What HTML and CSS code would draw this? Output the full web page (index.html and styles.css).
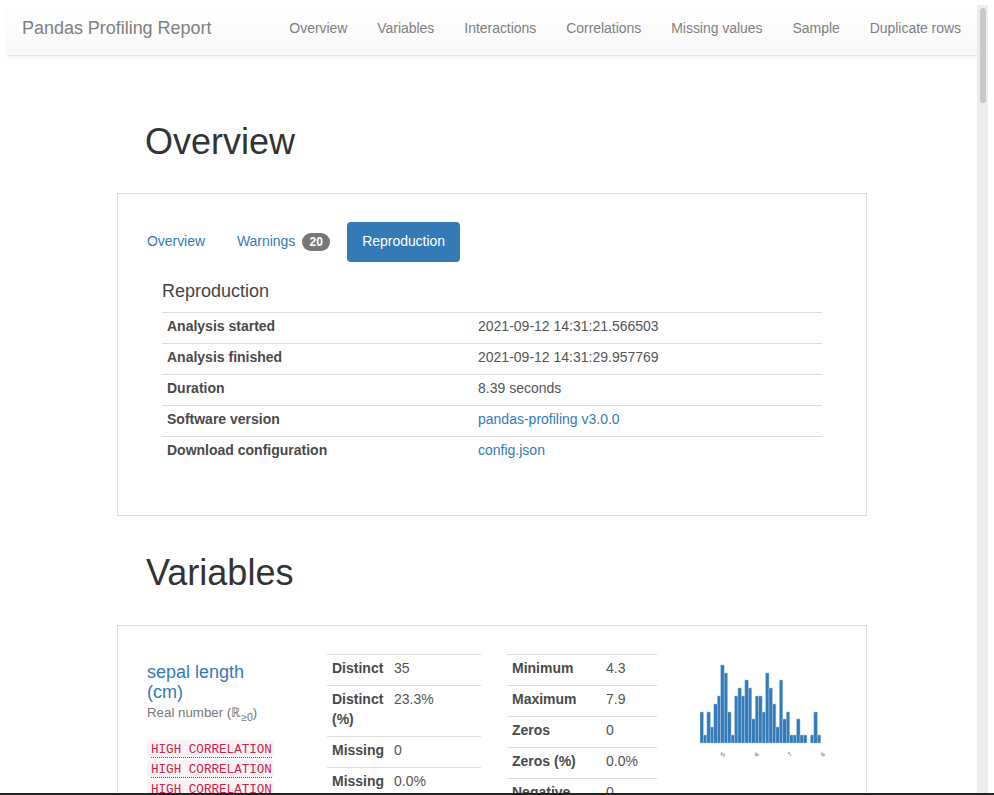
FILE: index.html
```html
<!DOCTYPE html>
<html lang="en">
<head>
    <meta charset="UTF-8">
    <title>Pandas Profiling Report</title>
    <link rel="stylesheet" href="styles.css">
</head>
<body>
    <nav class="navbar">
        <a class="brand" href="#">Pandas Profiling Report</a>
        <ul class="nav-links">
            <li><a href="#">Overview</a></li>
            <li><a href="#">Variables</a></li>
            <li><a href="#">Interactions</a></li>
            <li><a href="#">Correlations</a></li>
            <li><a href="#">Missing values</a></li>
            <li><a href="#">Sample</a></li>
            <li><a href="#">Duplicate rows</a></li>
        </ul>
    </nav>

    <main class="contenido">
        <h1 class="titulo-overview">Overview</h1>
        <section class="caja caja-overview">
            <ul class="pills">
                <li><a href="#">Overview</a></li>
                <li><a href="#">Warnings <span class="badge">20</span></a></li>
                <li><a class="activo" href="#">Reproduction</a></li>
            </ul>
            <div class="repro">
                <p class="repro-titulo">Reproduction</p>
                <table class="tabla tabla-repro">
                    <tr><th>Analysis started</th><td>2021-09-12 14:31:21.566503</td></tr>
                    <tr><th>Analysis finished</th><td>2021-09-12 14:31:29.957769</td></tr>
                    <tr><th>Duration</th><td>8.39 seconds</td></tr>
                    <tr><th>Software version</th><td><a href="#">pandas-profiling v3.0.0</a></td></tr>
                    <tr><th>Download configuration</th><td><a href="#">config.json</a></td></tr>
                </table>
            </div>
        </section>

        <h1 class="titulo-variables">Variables</h1>
        <section class="caja caja-variable">
            <div class="var-info">
                <a class="var-nombre" href="#">sepal length (cm)</a>
                <p class="var-tipo">Real number (&#8477;<sub>&ge;0</sub>)</p>
                <div class="alertas">
                    <code><abbr>HIGH CORRELATION</abbr></code>
                    <code><abbr>HIGH CORRELATION</abbr></code>
                    <code><abbr>HIGH CORRELATION</abbr></code>
                </div>
            </div>
            <table class="tabla tabla-a">
                <tr><th>Distinct</th><td>35</td></tr>
                <tr><th>Distinct (%)</th><td>23.3%</td></tr>
                <tr><th>Missing</th><td>0</td></tr>
                <tr><th>Missing (%)</th><td>0.0%</td></tr>
            </table>
            <table class="tabla tabla-b">
                <tr><th>Minimum</th><td>4.3</td></tr>
                <tr><th>Maximum</th><td>7.9</td></tr>
                <tr><th>Zeros</th><td>0</td></tr>
                <tr><th>Zeros (%)</th><td>0.0%</td></tr>
                <tr><th>Negative</th><td>0</td></tr>
            </table>
            <svg class="histograma" width="130" height="108" viewBox="0 0 130 108">
                <g fill="#337ab7" stroke="#a9cbe8" stroke-width="0.5">
                    <rect x="0.0" y="58" width="3.45" height="31"/>
                    <rect x="3.45" y="81" width="3.45" height="8"/>
                    <rect x="6.9" y="58" width="3.45" height="31"/>
                    <rect x="10.35" y="73" width="3.45" height="16"/>
                    <rect x="13.8" y="50" width="3.45" height="39"/>
                    <rect x="17.25" y="42" width="3.45" height="47"/>
                    <rect x="20.7" y="11" width="3.45" height="78"/>
                    <rect x="24.15" y="19" width="3.45" height="70"/>
                    <rect x="27.6" y="58" width="3.45" height="31"/>
                    <rect x="31.05" y="81" width="3.45" height="8"/>
                    <rect x="34.5" y="42" width="3.45" height="47"/>
                    <rect x="37.95" y="34" width="3.45" height="55"/>
                    <rect x="41.4" y="42" width="3.45" height="47"/>
                    <rect x="44.85" y="26" width="3.45" height="63"/>
                    <rect x="48.3" y="34" width="3.45" height="55"/>
                    <rect x="51.75" y="65" width="3.45" height="24"/>
                    <rect x="55.2" y="42" width="3.45" height="47"/>
                    <rect x="58.65" y="42" width="3.45" height="47"/>
                    <rect x="62.1" y="58" width="3.45" height="31"/>
                    <rect x="65.55" y="19" width="3.45" height="70"/>
                    <rect x="69.0" y="34" width="3.45" height="55"/>
                    <rect x="72.45" y="50" width="3.45" height="39"/>
                    <rect x="75.9" y="73" width="3.45" height="16"/>
                    <rect x="79.35" y="26" width="3.45" height="63"/>
                    <rect x="82.8" y="65" width="3.45" height="24"/>
                    <rect x="86.25" y="58" width="3.45" height="31"/>
                    <rect x="89.7" y="81" width="3.45" height="8"/>
                    <rect x="93.15" y="81" width="3.45" height="8"/>
                    <rect x="96.6" y="65" width="3.45" height="24"/>
                    <rect x="100.05" y="81" width="3.45" height="8"/>
                    <rect x="103.5" y="81" width="3.45" height="8"/>
                    <rect x="110.4" y="81" width="3.45" height="8"/>
                    <rect x="113.85" y="58" width="3.45" height="31"/>
                    <rect x="117.3" y="81" width="3.45" height="8"/>
                </g>
                <g class="ticks">
                    <text transform="translate(23 103) rotate(-45)">5</text>
                    <text transform="translate(57 103) rotate(-45)">6</text>
                    <text transform="translate(90 103) rotate(-45)">7</text>
                    <text transform="translate(123 103) rotate(-45)">8</text>
                </g>
            </svg>
        </section>
    </main>

    <div class="scroll-pista"><div class="scroll-barra"></div></div>
    <div class="borde-inferior"></div>
</body>
</html>
```

FILE: styles.css
```css
html, body {
    height: 100%;
    overflow: hidden;
}

body {
    margin: 0;
    font-family: "Liberation Sans", Arial, sans-serif;
    font-size: 14px;
    line-height: 20px;
    color: #333;
    background-color: #fff;
}

a {
    color: #337ab7;
    text-decoration: none;
}

.navbar {
    display: flex;
    justify-content: space-between;
    align-items: flex-start;
    box-sizing: border-box;
    width: 970px;
    height: 47px;
    margin: 9px 0 0 7px;
    padding: 9px 1px 0 15px;
    background: linear-gradient(to bottom, #fff, #f8f8f8);
    border-bottom: 1px solid #e7e7e7;
    box-shadow: 0 2px 4px rgba(0, 0, 0, 0.06);
}

.brand {
    font-size: 18px;
    color: #808080;
    letter-spacing: -0.03px;
}

.nav-links {
    display: flex;
    list-style: none;
    margin: 0;
    padding: 0;
    letter-spacing: -0.04px;
}

.nav-links a {
    display: block;
    padding: 0 15px;
    color: #808080;
}

.contenido {
    width: 750px;
    margin-left: 117px;
}

h1 {
    margin: 0;
    font-size: 36px;
    font-weight: 400;
    line-height: 40px;
}

.titulo-overview {
    margin: 66px 0 31px 28px;
}

.titulo-variables {
    margin: 37px 0 32px 29px;
}

.caja {
    box-sizing: border-box;
    border: 1px solid #ddd;
    background-color: #fff;
}

.caja-overview {
    height: 323px;
    padding: 28px 44px 0 14px;
}

.pills {
    display: flex;
    gap: 2px;
    list-style: none;
    margin: 0;
    padding: 0;
    letter-spacing: -0.05px;
}

.pills a {
    display: block;
    padding: 9px 15px 11px;
    border-radius: 4px;
}

.pills a.activo {
    color: #fff;
    background-color: #337ab7;
}

.badge {
    display: inline-block;
    min-width: 10px;
    margin-left: 3px;
    padding: 3px 7.5px;
    font-size: 12px;
    font-weight: 700;
    line-height: 12px;
    color: #fff;
    text-align: center;
    vertical-align: middle;
    background-color: #777;
    border-radius: 10px;
}

.repro {
    margin-left: 30px;
}

.repro-titulo {
    margin: 19px 0 11px;
    font-size: 18px;
    line-height: 20px;
    color: #444;
}

.tabla {
    border-collapse: collapse;
    table-layout: fixed;
}

.tabla th, .tabla td {
    padding: 3px 5px 7px;
    border-top: 1px solid #ddd;
    text-align: left;
    vertical-align: top;
    color: #555;
}

.tabla th {
    color: #4a4a4a;
}

.tabla td a {
    color: #337ab7;
}

.tabla-repro {
    width: 660px;
}

.tabla-repro th {
    width: 301px;
}

.caja-variable {
    display: flex;
    align-items: flex-start;
    height: 400px;
    padding: 28px 0 0 29px;
}

.var-info {
    flex: none;
    width: 128px;
    margin-right: 52px;
    padding-top: 8px;
}

.var-nombre {
    display: block;
    font-size: 18px;
    line-height: 20px;
}

.var-tipo {
    margin: 1px 0 0;
    font-size: 13.3px;
    color: #777;
    white-space: nowrap;
}

.var-tipo sub {
    font-size: 10.5px;
    line-height: 0;
}

.alertas {
    margin-top: 17px;
}

code {
    display: block;
    box-sizing: border-box;
    width: 127px;
    height: 18px;
    margin-bottom: 2px;
    padding: 0 4px;
    font-family: "Liberation Mono", monospace;
    font-size: 12.6px;
    line-height: 21px;
    white-space: nowrap;
    color: #c7254e;
    background-color: #f9f2f4;
    border-radius: 4px;
}

abbr {
    border-bottom: 1px dotted #c7254e;
}

.tabla-a {
    flex: none;
    width: 154px;
    margin-right: 26px;
}

.tabla-a th {
    width: 52px;
}

.tabla-b {
    flex: none;
    width: 150px;
    margin-right: 43px;
}

.tabla-b th {
    width: 84px;
}

.histograma {
    flex: none;
    margin: 0;
}

.ticks text {
    font-size: 6px;
    fill: #555;
}

.scroll-pista {
    position: fixed;
    top: 5px;
    left: 977px;
    bottom: 2px;
    width: 11px;
    background-color: #eeedeb;
}

.scroll-barra {
    width: 6px;
    height: 95px;
    margin: 3px 0 0 3px;
    background-color: #c8c8c8;
    border-radius: 3px;
}

.borde-inferior {
    position: fixed;
    left: 0;
    right: 0;
    bottom: 0;
    height: 2px;
    background-color: #222;
}
```
